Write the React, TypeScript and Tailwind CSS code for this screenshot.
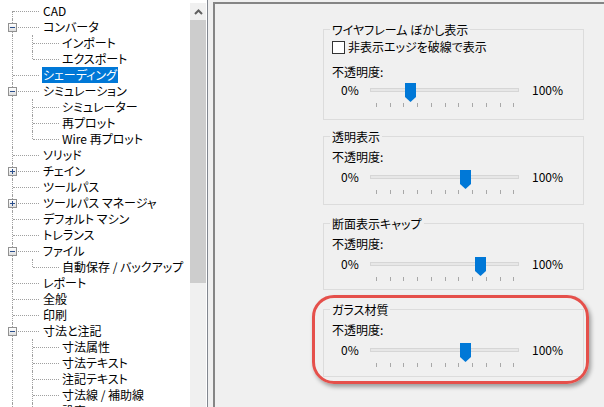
import React from 'react';

type TreeNode = {
  label: string;
  level: 1 | 2;
  exp?: '-' | '+';
  first?: boolean;
  last?: boolean;
  selected?: boolean;
};

const nodes: TreeNode[] = [
  { label: 'CAD', level: 1, first: true },
  { label: 'コンバータ', level: 1, exp: '-' },
  { label: 'インポート', level: 2 },
  { label: 'エクスポート', level: 2, last: true },
  { label: 'シェーディング', level: 1, selected: true },
  { label: 'シミュレーション', level: 1, exp: '-' },
  { label: 'シミュレーター', level: 2 },
  { label: '再プロット', level: 2 },
  { label: 'Wire 再プロット', level: 2, last: true },
  { label: 'ソリッド', level: 1 },
  { label: 'チェイン', level: 1, exp: '+' },
  { label: 'ツールパス', level: 1 },
  { label: 'ツールパス マネージャ', level: 1, exp: '+' },
  { label: 'デフォルト マシン', level: 1 },
  { label: 'トレランス', level: 1 },
  { label: 'ファイル', level: 1, exp: '-' },
  { label: '自動保存 / バックアップ', level: 2, last: true },
  { label: 'レポート', level: 1 },
  { label: '全般', level: 1 },
  { label: '印刷', level: 1 },
  { label: '寸法と注記', level: 1, exp: '-' },
  { label: '寸法属性', level: 2 },
  { label: '寸法テキスト', level: 2 },
  { label: '注記テキスト', level: 2 },
  { label: '寸法線 / 補助線', level: 2 },
  { label: '設定', level: 2 },
];

const TreeRow: React.FC<{ n: TreeNode }> = ({ n }) => (
  <div className="relative h-4 leading-4 whitespace-nowrap">
    <span
      className={`absolute left-[12px] w-0 bottom-0 border-l border-dotted border-[#a0a0a0] ${n.first ? 'top-[8px]' : 'top-0'}`}
    />
    {n.level === 1 ? (
      <span className="absolute left-[13px] top-[8px] w-[26px] h-0 border-t border-dotted border-[#a0a0a0]" />
    ) : (
      <>
        <span
          className={`absolute left-[32px] w-0 top-0 border-l border-dotted border-[#a0a0a0] ${n.last ? 'h-[8px]' : 'bottom-0'}`}
        />
        <span className="absolute left-[33px] top-[8px] w-[26px] h-0 border-t border-dotted border-[#a0a0a0]" />
      </>
    )}
    {n.exp && (
      <span className="absolute left-[8px] top-[4px] w-[9px] h-[9px] border border-[#919191] bg-gradient-to-b from-white to-[#dedede] flex items-center justify-center">
        <span className="relative w-[5px] h-px bg-[#2b4f8c]">
          {n.exp === '+' && <span className="absolute left-[2px] top-[-2px] w-px h-[5px] bg-[#2b4f8c]" />}
        </span>
      </span>
    )}
    {n.selected ? (
      <span className="ml-[42px] inline-block h-4 px-px bg-[#0078d7] text-white">{n.label}</span>
    ) : (
      <span className={n.level === 1 ? 'pl-[43px]' : 'pl-[62px]'}>{n.label}</span>
    )}
  </div>
);

const ticks = Array.from({ length: 11 }, (_, i) => i);

const Slider: React.FC<{ value: number }> = ({ value }) => (
  <div className="flex h-[24px]">
    <span className="w-[38px] pl-[9px] leading-[14px]">0%</span>
    <div className="relative w-[149px] h-[24px]">
      <div className="absolute left-0 right-0 top-[5px] h-[4px] bg-[#e7e7e7] border border-[#d6d6d6]" />
      {ticks.map(i => (
        <span
          key={i}
          className="absolute top-[20px] w-px h-[4px] bg-[#a8a8a8]"
          style={{ left: 6 + Math.round(i * 13.73) }}
        />
      ))}
      <svg
        className="absolute top-0"
        style={{ left: Math.round(6 + value * 1.373 - 5.5) }}
        width="11"
        height="19"
        viewBox="0 0 11 19"
      >
        <polygon points="0,0 11,0 11,14 5.5,19 0,14" fill="#0078d7" />
      </svg>
    </div>
    <span className="pl-[13px] leading-[14px]">100%</span>
  </div>
);

const Group: React.FC<{ title: string; className: string; children: React.ReactNode }> = ({
  title,
  className,
  children,
}) => (
  <div className={`relative w-[261px] border border-[#dcdcdc] pl-[8px] ${className}`}>
    <span className="absolute top-[-8px] left-[6px] px-[2px] bg-[#f0f0f0] leading-4 whitespace-nowrap">{title}</span>
    {children}
  </div>
);

export default function App() {
  return (
    <div className="w-[604px] h-[407px] overflow-hidden bg-[#f0f0f0] flex items-start text-[12px] text-black [font-family:'Noto_Sans_CJK_JP','Noto_Sans',sans-serif] [font-feature-settings:'palt']">
      {/* tree view */}
      <div className="w-[208px] h-[418px] shrink-0 bg-white border-r border-[#828790] flex pt-[3px]">
        <div className="flex-1 overflow-hidden">
          {nodes.map(n => (
            <TreeRow key={n.label} n={n} />
          ))}
        </div>
        <div className="w-[16px] mr-px bg-[#f0f0f0] flex flex-col">
          <div className="h-[17px] flex items-center justify-center">
            <svg width="9" height="6" viewBox="0 0 9 6">
              <path d="M1 5 L4.5 1.5 L8 5" fill="none" stroke="#606060" strokeWidth="2" />
            </svg>
          </div>
          <div className="h-[263px] bg-[#cdcdcd]" />
          <div className="flex-1" />
          <div className="h-[17px] flex items-center justify-center">
            <svg width="9" height="6" viewBox="0 0 9 6">
              <path d="M1 1 L4.5 4.5 L8 1" fill="none" stroke="#606060" strokeWidth="2" />
            </svg>
          </div>
        </div>
      </div>

      {/* settings panel */}
      <div className="ml-[5px] mt-[2px] flex-1 h-[420px] border-l-2 border-t-2 border-[#858585] pl-[108px] pt-[25px]">
        <Group title="ワイヤフレーム ぼかし表示" className="h-[91px] pt-[9px]">
          <div className="flex items-center h-4 leading-4">
            <span className="w-[13px] h-[13px] border border-[#333333] bg-white" />
            <span className="ml-[3px]">非表示エッジを破線で表示</span>
          </div>
          <div className="mt-[9px] h-4 leading-4">不透明度:</div>
          <div className="mt-[3px]">
            <Slider value={25} />
          </div>
        </Group>

        <Group title="透明表示" className="mt-[16px] h-[69px] pt-[12px]">
          <div className="h-4 leading-4">不透明度:</div>
          <div className="mt-[5px]">
            <Slider value={65} />
          </div>
        </Group>

        <Group title="断面表示キャップ" className="mt-[18px] h-[67px] pt-[12px]">
          <div className="h-4 leading-4">不透明度:</div>
          <div className="mt-[5px]">
            <Slider value={76} />
          </div>
        </Group>

        <Group title="ガラス材質" className="mt-[19px] h-[68px] pt-[12px]">
          <div className="h-4 leading-4">不透明度:</div>
          <div className="mt-[5px]">
            <Slider value={65} />
          </div>
          <div className="absolute left-[-12px] top-[-15px] w-[277px] h-[89px] rounded-[22px] border-[3px] border-[#e5504b] shadow-[2px_3px_4px_rgba(0,0,0,0.35)] pointer-events-none" />
        </Group>
      </div>
    </div>
  );
}
